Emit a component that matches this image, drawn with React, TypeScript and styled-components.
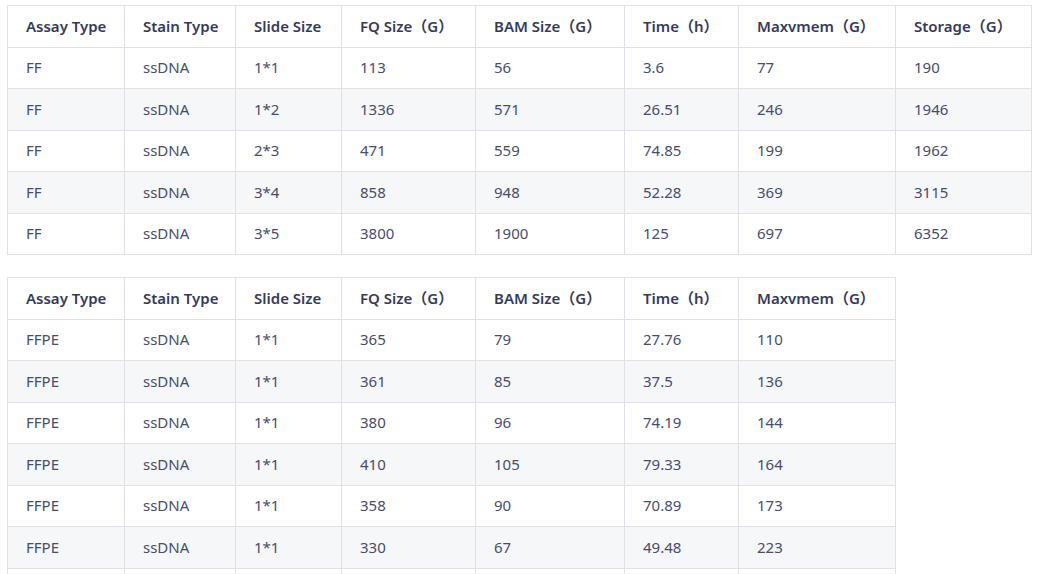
import React from "react";
import styled, { createGlobalStyle } from "styled-components";

const Global = createGlobalStyle`
  html, body { margin: 0; padding: 0; background: #ffffff; }
  body { font-family: "Segoe UI", "Noto Sans", "Noto Sans CJK SC", sans-serif; }
`;

const Page = styled.div`
  display: flex;
  flex-direction: column;
  align-items: flex-start;
  gap: 22px;
  padding: 5px 7px;
  height: 574px;
  overflow: hidden;
  box-sizing: border-box;
`;

const Table = styled.table<{ $w: number }>`
  width: ${(p) => p.$w}px;
  border-collapse: collapse;
  table-layout: fixed;
  font-size: 15px;
  line-height: 25.5px;
  flex-shrink: 0;
`;

const Th = styled.th`
  text-align: left;
  font-weight: 600;
  color: #353b5a;
  padding: 7.5px 18px;
  border: 1px solid #dfe1e8;
  white-space: nowrap;
`;

const Tr = styled.tr`
  &:nth-child(even) td { background: #f6f7f9; }
`;

const Td = styled.td`
  color: #474d6b;
  padding: 7.5px 18px;
  border: 1px solid #dfe1e8;
  white-space: nowrap;
  height: 25.5px;
`;

const widths = [117, 111, 106, 134, 149, 114, 157, 136];
const headers = ["Assay Type", "Stain Type", "Slide Size", "FQ Size（G）", "BAM Size（G）", "Time（h）", "Maxvmem（G）", "Storage（G）"];

const rows1 = [
  ["FF", "ssDNA", "1*1", "113", "56", "3.6", "77", "190"],
  ["FF", "ssDNA", "1*2", "1336", "571", "26.51", "246", "1946"],
  ["FF", "ssDNA", "2*3", "471", "559", "74.85", "199", "1962"],
  ["FF", "ssDNA", "3*4", "858", "948", "52.28", "369", "3115"],
  ["FF", "ssDNA", "3*5", "3800", "1900", "125", "697", "6352"],
];

const rows2 = [
  ["FFPE", "ssDNA", "1*1", "365", "79", "27.76", "110"],
  ["FFPE", "ssDNA", "1*1", "361", "85", "37.5", "136"],
  ["FFPE", "ssDNA", "1*1", "380", "96", "74.19", "144"],
  ["FFPE", "ssDNA", "1*1", "410", "105", "79.33", "164"],
  ["FFPE", "ssDNA", "1*1", "358", "90", "70.89", "173"],
  ["FFPE", "ssDNA", "1*1", "330", "67", "49.48", "223"],
  ["", "", "", "", "", "", ""],
];

function DataTable({ cols, rows }: { cols: number; rows: string[][] }) {
  const w = widths.slice(0, cols);
  const total = w.reduce((a, b) => a + b, 0);
  return (
    <Table $w={total}>
      <colgroup>
        {w.map((x, i) => (
          <col key={i} style={{ width: x }} />
        ))}
      </colgroup>
      <thead>
        <tr>
          {headers.slice(0, cols).map((h) => (
            <Th key={h}>{h}</Th>
          ))}
        </tr>
      </thead>
      <tbody>
        {rows.map((r, i) => (
          <Tr key={i}>
            {r.map((c, j) => (
              <Td key={j}>{c}</Td>
            ))}
          </Tr>
        ))}
      </tbody>
    </Table>
  );
}

export default function App() {
  return (
    <>
      <Global />
      <Page>
        <DataTable cols={8} rows={rows1} />
        <DataTable cols={7} rows={rows2} />
      </Page>
    </>
  );
}
